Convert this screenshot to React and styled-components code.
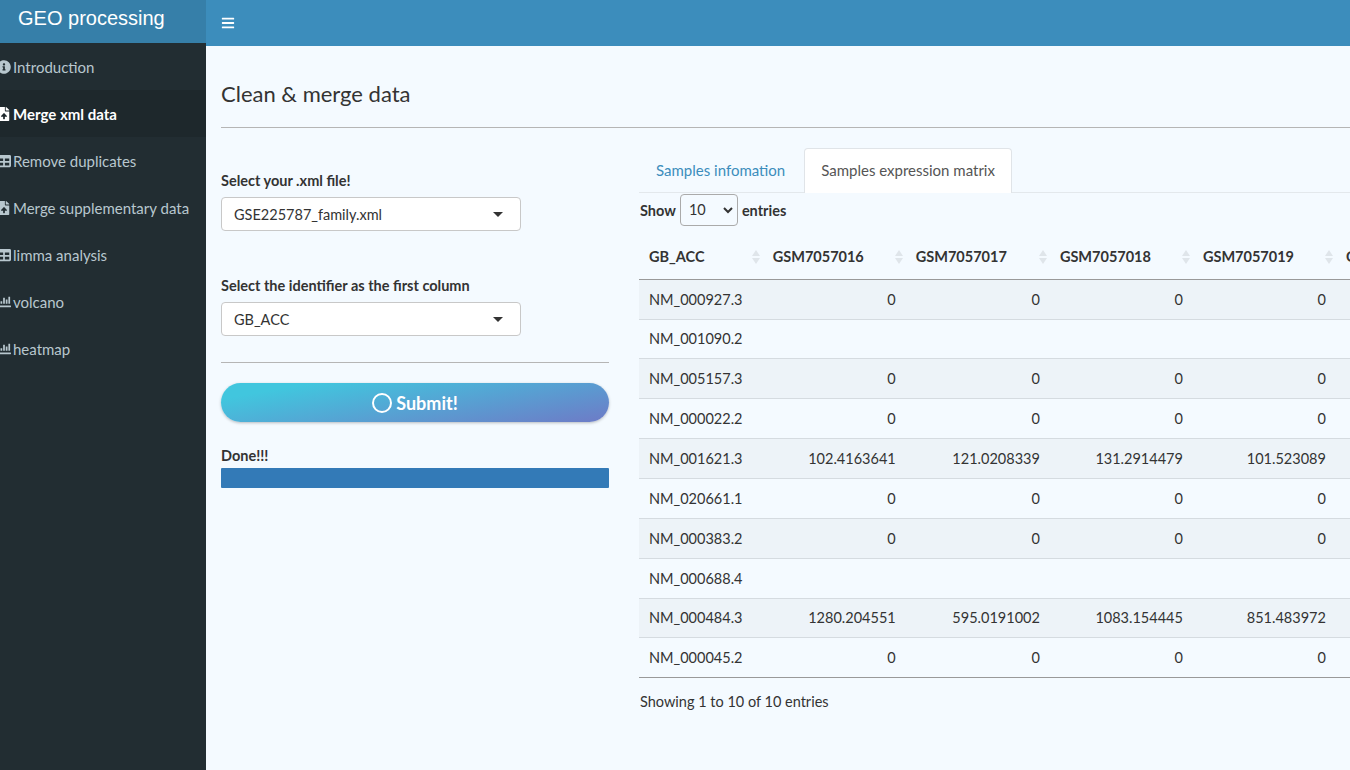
import React from 'react';
import styled, { createGlobalStyle } from 'styled-components';
import { FaBars, FaInfoCircle, FaFileUpload, FaTable, FaChartBar } from 'react-icons/fa';

const GlobalStyle = createGlobalStyle`
  html, body {
    margin: 0;
    padding: 0;
    height: 100%;
    overflow: hidden;
  }
  body {
    font-family: "Lato", "Liberation Sans", sans-serif;
    font-size: 15px;
    color: #333;
    background: #f4faff;
  }
  * {
    box-sizing: border-box;
  }
`;

const Page = styled.div`
  width: 1350px;
  height: 770px;
  display: grid;
  grid-template-columns: 206px 1fr;
  grid-template-rows: 46px 1fr;
  overflow: hidden;
`;

const Brand = styled.div`
  background: #367fa9;
  color: #fff;
  font-family: "Liberation Sans", Arial, sans-serif;
  font-size: 20px;
  height: 43px;
  line-height: 37px;
  padding-left: 18px;
`;

const TopBar = styled.header`
  background: #3c8dbc;
  color: #fff;
  display: flex;
  align-items: center;
  padding: 0 15px 1px;
  font-size: 14px;
`;

const Sidebar = styled.nav`
  background: #222d32;
  margin-top: -3px;
  display: flex;
  flex-direction: column;
`;

const NavItem = styled.div`
  height: 47px;
  padding-left: 0;
  display: flex;
  align-items: center;
  gap: 2px;
  font-size: 15px;
  white-space: nowrap;
  overflow: hidden;
  color: ${({ $active }) => ($active ? '#fff' : '#b8c7ce')};
  background: ${({ $active }) => ($active ? '#1e282c' : 'transparent')};
  font-weight: ${({ $active }) => ($active ? 700 : 400)};

  svg {
    flex: none;
    margin-left: -3px;
    width: 14px;
    height: 14px;
  }
`;

const Content = styled.main`
  padding: 0 0 0 15px;
  overflow: hidden;
`;

const Title = styled.h1`
  margin: 0;
  height: 82px;
  padding-top: 34px;
  font-size: 22px;
  line-height: 28px;
  font-weight: 400;
  color: #333;
  border-bottom: 1px solid #b5b5b5;
`;

const Columns = styled.div`
  display: grid;
  grid-template-columns: 388px 711px;
  column-gap: 30px;
  padding-top: 20px;
`;

const Left = styled.section`
  padding-top: 24px;
  display: flex;
  flex-direction: column;
`;

const Label = styled.label`
  font-weight: 700;
  font-size: 14.5px;
  line-height: 17px;
  color: #333;
  margin-bottom: 8px;
`;

const Select = styled.div`
  width: 300px;
  height: 34px;
  background: #fff;
  border: 1px solid #c8c8c8;
  border-radius: 4px;
  padding: 0 12px;
  font-size: 14.5px;
  color: #333;
  display: flex;
  align-items: center;
  justify-content: space-between;
  margin-bottom: ${({ $gap }) => $gap}px;

  &::after {
    content: '';
    margin-right: 5px;
    border-left: 5px solid transparent;
    border-right: 5px solid transparent;
    border-top: 5px solid #333;
  }
`;

const Rule = styled.hr`
  margin: 0 0 20px;
  border: 0;
  border-top: 1px solid #b5b5b5;
`;

const SubmitButton = styled.button`
  height: 39px;
  border: 0;
  border-radius: 20px;
  background: linear-gradient(170deg, #41c6de 15%, #6b7fc8 95%);
  box-shadow: 0 1px 3px rgba(0, 0, 0, 0.25);
  color: #fff;
  font-family: inherit;
  font-size: 18px;
  font-weight: 700;
  display: flex;
  align-items: center;
  justify-content: center;
  gap: 4px;
  padding: 0;
  margin-bottom: 25px;
`;

const Ring = styled.span`
  width: 20px;
  height: 20px;
  border: 2px solid #fff;
  border-radius: 50%;
`;

const DoneLabel = styled.div`
  font-weight: 700;
  font-size: 14.5px;
  line-height: 18px;
  color: #333;
  margin-bottom: 3px;
`;

const ProgressBar = styled.div`
  height: 20px;
  background: #337ab7;
  border-radius: 1px;
`;

const Right = styled.section`
  min-width: 0;
  overflow: hidden;
`;

const Tabs = styled.div`
  display: flex;
  height: 45px;
  border-bottom: 1px solid #e3e8ec;
`;

const Tab = styled.div`
  padding: 0 16px;
  height: ${({ $active }) => ($active ? '45px' : '44px')};
  line-height: 43px;
  font-size: 15px;
  color: ${({ $active }) => ($active ? '#555' : '#3c8dbc')};
  background: ${({ $active }) => ($active ? '#fff' : 'transparent')};
  border: 1px solid ${({ $active }) => ($active ? '#e0e4e8' : 'transparent')};
  border-bottom: 0;
  border-radius: 4px 4px 0 0;
  margin-right: 2px;
`;

const LengthRow = styled.div`
  display: flex;
  align-items: center;
  gap: 4px;
  height: 32px;
  margin-top: 1px;
  font-weight: 700;
  font-size: 14.5px;
  padding-left: 1px;
`;

const LengthSelect = styled.div`
  width: 58px;
  height: 32px;
  border: 1px solid #aaa;
  border-radius: 4px;
  padding-left: 8px;
  line-height: 30px;
  font-weight: 400;
  font-size: 14.5px;
  display: flex;
  align-items: center;
  justify-content: space-between;
  padding-right: 4px;

  svg {
    width: 10px;
    height: 10px;
  }
`;

const Table = styled.table`
  border-collapse: collapse;
  table-layout: fixed;
  width: 840px;
  margin-top: 9px;
  font-size: 14.5px;
`;

const Th = styled.th`
  height: 44px;
  padding: 0 10px;
  text-align: left;
  font-weight: 700;
  color: #333;
  border-bottom: 1px solid #999;
  position: relative;
  white-space: nowrap;
  overflow: hidden;
`;

const SortMark = styled.span`
  position: absolute;
  right: 3px;
  top: 15px;
  display: flex;
  flex-direction: column;
  gap: 2px;

  &::before,
  &::after {
    content: '';
    border-left: 4px solid transparent;
    border-right: 4px solid transparent;
  }
  &::before {
    border-bottom: 6px solid #dfe5ea;
  }
  &::after {
    border-top: 6px solid #dfe5ea;
  }
`;

const Row = styled.tr`
  background: ${({ $odd }) => ($odd ? '#edf3f8' : 'transparent')};
`;

const Td = styled.td`
  height: ${({ $h }) => $h}px;
  padding: 0 10px;
  text-align: ${({ $first }) => ($first ? 'left' : 'right')};
  white-space: nowrap;
  overflow: hidden;
  color: #333;
  border-top: 1px solid #d5dbe0;
`;

const TableEnd = styled.div`
  width: 840px;
  border-top: 1px solid #999;
`;

const Info = styled.div`
  margin-top: 15px;
  padding-left: 1px;
  font-size: 14.5px;
  line-height: 18px;
`;

const navItems = [
  { label: 'Introduction', icon: FaInfoCircle },
  { label: 'Merge xml data', icon: FaFileUpload, active: true },
  { label: 'Remove duplicates', icon: FaTable },
  { label: 'Merge supplementary data', icon: FaFileUpload },
  { label: 'limma analysis', icon: FaTable },
  { label: 'volcano', icon: FaChartBar },
  { label: 'heatmap', icon: FaChartBar },
];

const columns = ['GB_ACC', 'GSM7057016', 'GSM7057017', 'GSM7057018', 'GSM7057019', 'GSM7057020'];

const rows = [
  { h: 40, cells: ['NM_000927.3', '0', '0', '0', '0', '0'] },
  { h: 39, cells: ['NM_001090.2', '', '', '', '', ''] },
  { h: 40, cells: ['NM_005157.3', '0', '0', '0', '0', '0'] },
  { h: 40, cells: ['NM_000022.2', '0', '0', '0', '0', '0'] },
  { h: 40, cells: ['NM_001621.3', '102.4163641', '121.0208339', '131.2914479', '101.523089', '131.1467411'] },
  { h: 40, cells: ['NM_020661.1', '0', '0', '0', '0', '0'] },
  { h: 40, cells: ['NM_000383.2', '0', '0', '0', '0', '0'] },
  { h: 40, cells: ['NM_000688.4', '', '', '', '', ''] },
  { h: 39, cells: ['NM_000484.3', '1280.204551', '595.0191002', '1083.154445', '851.483972', '3774.111702'] },
  { h: 40, cells: ['NM_000045.2', '0', '0', '0', '0', '0'] },
];

export default function App() {
  return (
    <>
      <GlobalStyle />
      <Page>
        <Brand>GEO processing</Brand>
        <TopBar>
          <FaBars />
        </TopBar>
        <Sidebar>
          {navItems.map(({ label, icon: Icon, active }) => (
            <NavItem key={label} $active={active}>
              <Icon />
              {label}
            </NavItem>
          ))}
        </Sidebar>
        <Content>
          <Title>Clean &amp; merge data</Title>
          <Columns>
            <Left>
              <Label>Select your .xml file!</Label>
              <Select $gap={46}>GSE225787_family.xml</Select>
              <Label>Select the identifier as the first column</Label>
              <Select $gap={26}>GB_ACC</Select>
              <Rule />
              <SubmitButton>
                <Ring />
                Submit!
              </SubmitButton>
              <DoneLabel>Done!!!</DoneLabel>
              <ProgressBar />
            </Left>
            <Right>
              <Tabs>
                <Tab>Samples infomation</Tab>
                <Tab $active>Samples expression matrix</Tab>
              </Tabs>
              <LengthRow>
                Show
                <LengthSelect>
                  10
                  <svg viewBox="0 0 10 10">
                    <path d="M1 3l4 4 4-4" fill="none" stroke="#333" strokeWidth="2" />
                  </svg>
                </LengthSelect>
                entries
              </LengthRow>
              <Table>
                <colgroup>
                  <col style={{ width: 109 }} />
                  <col style={{ width: 126 }} />
                  <col style={{ width: 127 }} />
                  <col style={{ width: 126 }} />
                  <col style={{ width: 126 }} />
                  <col style={{ width: 126 }} />
                </colgroup>
                <thead>
                  <tr>
                    {columns.map((name) => (
                      <Th key={name}>
                        {name}
                        <SortMark />
                      </Th>
                    ))}
                  </tr>
                </thead>
                <tbody>
                  {rows.map((row, i) => (
                    <Row key={row.cells[0]} $odd={i % 2 === 0}>
                      {row.cells.map((cell, j) => (
                        <Td key={j} $first={j === 0} $h={row.h}>
                          {cell}
                        </Td>
                      ))}
                    </Row>
                  ))}
                </tbody>
              </Table>
              <TableEnd />
              <Info>Showing 1 to 10 of 10 entries</Info>
            </Right>
          </Columns>
        </Content>
      </Page>
    </>
  );
}
